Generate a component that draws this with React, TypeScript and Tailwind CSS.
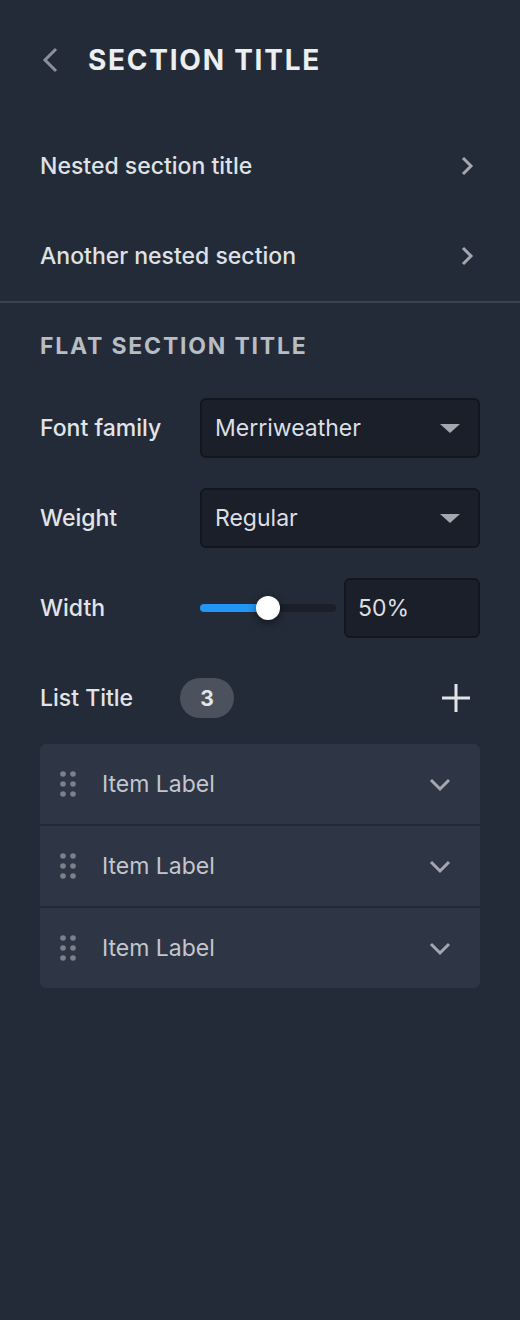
import React from "react";

const Chevron = ({ dir, className }: { dir: "left" | "right" | "down"; className?: string }) => {
  const d =
    dir === "left" ? "M16 3 L5 14 L16 25" : dir === "right" ? "M3 3 L11 11 L3 19" : "M3 5 L12 14 L21 5";
  return (
    <svg className={className} viewBox={dir === "left" ? "0 0 20 28" : dir === "right" ? "0 0 14 22" : "0 0 24 18"} fill="none" stroke="currentColor" strokeWidth="3" strokeLinejoin="miter">
      <path d={d} />
    </svg>
  );
};

const Select = ({ value }: { value: string }) => (
  <div className="flex h-[60px] w-[280px] items-center justify-between rounded-md border-2 border-[#12161d] bg-[#1a1f29] pl-[13px] pr-[18px]">
    <span className="text-[23px] leading-none text-[#dcdfe3]">{value}</span>
    <svg width="20" height="9" viewBox="0 0 20 9" className="text-[#a4a8ae]">
      <path d="M0 0 H20 L10 9 Z" fill="currentColor" />
    </svg>
  </div>
);

const DragDots = () => (
  <svg width="16" height="26" viewBox="0 0 16 26" className="text-[#7b818b]">
    {[3, 13, 23].map((y) => (
      <g key={y}>
        <circle cx="3" cy={y} r="2.8" fill="currentColor" />
        <circle cx="13" cy={y} r="2.8" fill="currentColor" />
      </g>
    ))}
  </svg>
);

const ListItem = () => (
  <div className="flex h-[80px] items-center bg-[#2e3544] pl-5 pr-[28px]">
    <DragDots />
    <span className="ml-[26px] flex-1 text-[23px] leading-none text-[#c3c7cd]">Item Label</span>
    <Chevron dir="down" className="h-[18px] w-[24px] text-[#a4a8ae]" />
  </div>
);

export default function App() {
  return (
    <div
      className="min-h-[1320px] w-[520px] bg-[#232b38] pt-[45px] text-[#e2e4e7]"
      style={{ fontFamily: "Inter, 'Noto Sans', sans-serif" }}
    >
      <div className="flex h-[30px] items-center px-10">
        <Chevron dir="left" className="h-[30px] w-[20px] text-[#8b9099]" />
        <h1 className="ml-[28px] text-[28px] font-bold leading-none tracking-[1.75px] text-[#eceef0]">SECTION TITLE</h1>
      </div>

      <div className="mt-[46px] px-10">
        {["Nested section title", "Another nested section"].map((t) => (
          <div key={t} className="flex h-[90px] items-center justify-between">
            <span className="text-[23px] font-medium leading-none text-[#dfe1e4]">{t}</span>
            <Chevron dir="right" className="mr-[6px] h-[22px] w-[14px] text-[#a4a8ae]" />
          </div>
        ))}
      </div>

      <div className="h-[2px] bg-[#3a4350]" />

      <div className="px-10 pt-[31px]">
        <h2 className="h-[24px] text-[23px] font-bold leading-[24px] tracking-[1.8px] text-[#b9bdc3]">FLAT SECTION TITLE</h2>

        <div className="mt-[40px] flex flex-col gap-[30px]">
          <div className="flex items-center justify-between">
            <span className="text-[23px] font-medium leading-none">Font family</span>
            <Select value="Merriweather" />
          </div>
          <div className="flex items-center justify-between">
            <span className="text-[23px] font-medium leading-none">Weight</span>
            <Select value="Regular" />
          </div>
          <div className="flex items-center justify-between">
            <span className="text-[23px] font-medium leading-none">Width</span>
            <div className="flex w-[280px] items-center gap-2">
              <div className="relative h-[8px] w-[136px] rounded-full bg-[#1a1f29]">
                <div className="h-full w-[68px] rounded-full bg-[#2196f3]" />
                <div className="absolute left-[56px] top-[-8px] h-[24px] w-[24px] rounded-full bg-white shadow-[0_3px_8px_rgba(0,0,0,0.45)]" />
              </div>
              <div className="flex h-[60px] flex-1 items-center rounded-md border-2 border-[#12161d] bg-[#1a1f29] pl-[12px]">
                <span className="text-[23px] leading-none text-[#dcdfe3]">50%</span>
              </div>
            </div>
          </div>
        </div>

        <div className="mt-[40px] flex h-[40px] items-center">
          <span className="w-[140px] text-[23px] font-medium leading-none">List Title</span>
          <span className="flex h-[40px] w-[54px] items-center justify-center rounded-full bg-[#4b525d] text-[21px] font-bold leading-none text-[#e4e6e9]">
            3
          </span>
          <div className="flex-1" />
          <svg width="28" height="28" viewBox="0 0 28 28" className="mr-[10px] text-[#e2e4e7]">
            <path d="M14 0 V28 M0 14 H28" stroke="currentColor" strokeWidth="3" />
          </svg>
        </div>

        <div className="mt-[26px] flex flex-col gap-[2px] overflow-hidden rounded-md bg-[#222a36]">
          <ListItem />
          <ListItem />
          <ListItem />
        </div>
      </div>
    </div>
  );
}
